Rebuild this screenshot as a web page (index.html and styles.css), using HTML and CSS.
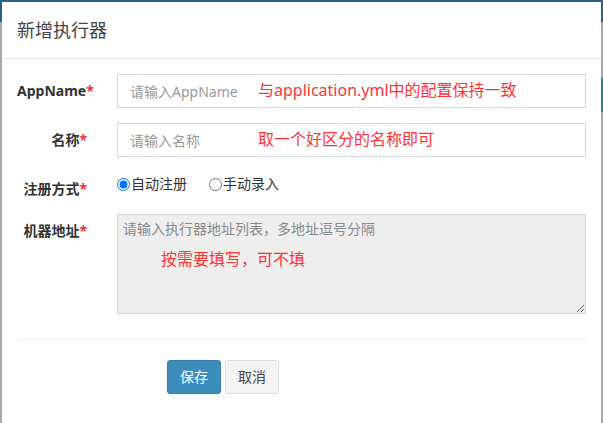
FILE: index.html
```html
<!DOCTYPE html>
<html lang="zh-CN">
<head>
<meta charset="utf-8">
<title>新增执行器</title>
<link rel="stylesheet" href="styles.css">
</head>
<body>
<div class="page-bg">
  <div class="topbar"></div>
  <div class="side-accent"></div>
</div>
<div class="modal">
  <div class="modal-header">
    <h4 class="modal-title">新增执行器</h4>
  </div>
  <div class="modal-body">
    <form class="form">
      <div class="form-row">
        <label class="form-label">AppName<span class="req">*</span></label>
        <div class="field">
          <input class="form-control" type="text" placeholder="请输入AppName">
          <span class="note note-app">与application.yml中的配置保持一致</span>
        </div>
      </div>
      <div class="form-row">
        <label class="form-label">名称<span class="req">*</span></label>
        <div class="field">
          <input class="form-control" type="text" placeholder="请输入名称">
          <span class="note note-app">取一个好区分的名称即可</span>
        </div>
      </div>
      <div class="form-row">
        <label class="form-label">注册方式<span class="req">*</span></label>
        <div class="radios">
          <label class="radio"><input type="radio" name="addressType" checked>自动注册</label>
          <label class="radio"><input type="radio" name="addressType">手动录入</label>
        </div>
      </div>
      <div class="form-row">
        <label class="form-label">机器地址<span class="req">*</span></label>
        <div class="field">
          <textarea class="form-control textarea" readonly placeholder="请输入执行器地址列表，多地址逗号分隔"></textarea>
          <span class="note note-area">按需要填写，可不填</span>
        </div>
      </div>
      <hr class="divider">
      <div class="actions">
        <button type="button" class="btn btn-primary">保存</button>
        <button type="button" class="btn btn-default">取消</button>
      </div>
    </form>
  </div>
</div>
</body>
</html>
```
FILE: styles.css
```css
html, body {
  margin: 0;
  padding: 0;
  height: 100%;
  overflow: hidden;
}
body {
  background: #a9a9a9;
  font-family: "Noto Sans", "Noto Sans CJK SC", sans-serif;
  font-size: 14px;
  color: #333;
}
.page-bg {
  height: 0;
}
.topbar {
  height: 22px;
  background: #2c6181;
}
.side-accent {
  position: absolute;
  right: 0;
  top: 78px;
  width: 2px;
  height: 34px;
  background: #2a7ea3;
}
.modal {
  position: absolute;
  left: 2px;
  top: 2px;
  width: 599px;
  height: 421px;
  background: #fff;
}
.modal-header {
  padding: 15px;
  border-bottom: 1px solid #e5e5e5;
}
.modal-title {
  margin: 0;
  font-size: 18px;
  line-height: 26px;
  font-weight: 400;
  color: #444;
}
.modal-body {
  padding: 15px;
}
.form {
  margin: 0;
}
.form-row {
  display: grid;
  grid-template-columns: 100px 1fr;
  margin-bottom: 15px;
}
.form-label {
  text-align: right;
  padding: 7px 30px 0 0;
  line-height: 20px;
  font-weight: 700;
  color: #333;
}
.req {
  color: #e33;
}
.field {
  position: relative;
}
.form-control {
  display: block;
  box-sizing: border-box;
  width: 100%;
  height: 34px;
  margin: 0;
  padding: 6px 12px;
  border: 1px solid #d2d6de;
  border-radius: 0;
  background: #fff;
  font-family: "Noto Sans", "Noto Sans CJK SC", sans-serif;
  font-size: 14px;
  line-height: 20px;
  color: #555;
  outline: none;
}
.form-control::placeholder {
  color: #999;
}
.textarea {
  height: 100px;
  padding: 4px 5px;
  background: #eeeeee;
  resize: both;
}
.textarea::placeholder {
  color: #8a8a8a;
}
.note {
  position: absolute;
  color: #fb3434;
  font-size: 16px;
  line-height: 22px;
  white-space: nowrap;
}
.note-app {
  left: 141px;
  top: 5px;
}
.note-area {
  left: 44px;
  top: 34px;
}
.radios {
  padding-top: 2px;
  line-height: 20px;
  display: flex;
  align-items: center;
  align-self: start;
}
.radio {
  display: inline-flex;
  align-items: center;
  margin-right: 22px;
  color: #333;
}
.radio input {
  width: 13px;
  height: 13px;
  margin: 0 1px 0 0;
}
.divider {
  border: 0;
  border-top: 1px solid #eee;
  margin: 25px 0 20px;
}
.actions {
  display: flex;
  gap: 4px;
  padding-left: 150px;
}
.btn {
  box-sizing: border-box;
  height: 34px;
  padding: 6px 12px;
  border: 1px solid transparent;
  border-radius: 3px;
  font-family: "Noto Sans", "Noto Sans CJK SC", sans-serif;
  font-size: 14px;
  line-height: 20px;
}
.btn-primary {
  background: #3c8dbc;
  border-color: #367fa9;
  color: #fff;
}
.btn-default {
  background: #f4f4f4;
  border-color: #ddd;
  color: #444;
}
```
